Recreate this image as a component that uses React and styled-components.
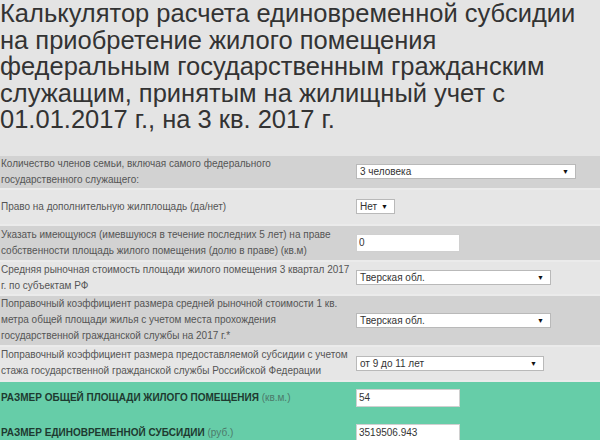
import React from "react";
import styled, { createGlobalStyle } from "styled-components";

const GlobalStyle = createGlobalStyle`
  html, body {
    margin: 0;
    padding: 0;
    background: #e4e4e4;
  }
  body {
    font-family: "Liberation Sans", Arial, sans-serif;
    overflow: hidden;
  }
`;

const rows = [
  {
    label: "Количество членов семьи, включая самого федерального государственного служащего:",
    control: { type: "select", value: "3 человека", width: 220 },
    tone: "dark",
    h: 32,
  },
  {
    label: "Право на дополнительную жилплощадь (да/нет)",
    control: { type: "select", value: "Нет", width: 39 },
    tone: "light",
    h: 34,
  },
  {
    label:
      "Указать имеющуюся (имевшуюся в течение последних 5 лет) на праве собственности площадь жилого помещения (долю в праве) (кв.м)",
    control: { type: "input", value: "0" },
    tone: "dark",
    h: 34,
  },
  {
    label: "Средняя рыночная стоимость площади жилого помещения 3 квартал 2017 г. по субъектам РФ",
    control: { type: "select", value: "Тверская обл.", width: 195 },
    tone: "light",
    h: 32,
  },
  {
    label:
      "Поправочный коэффициент размера средней рыночной стоимости 1 кв. метра общей площади жилья с учетом места прохождения государственной гражданской службы на 2017 г.*",
    control: { type: "select", value: "Тверская обл.", width: 195 },
    tone: "dark",
    h: 49,
  },
  {
    label:
      "Поправочный коэффициент размера предоставляемой субсидии с учетом стажа государственной гражданской службы Российской Федерации",
    control: { type: "select", value: "от 9 до 11 лет", width: 188 },
    tone: "light",
    h: 33,
  },
];

const results = [
  { title: "РАЗМЕР ОБЩЕЙ ПЛОЩАДИ ЖИЛОГО ПОМЕЩЕНИЯ", unit: "(кв.м.)", value: "54", h: 32 },
  { title: "РАЗМЕР ЕДИНОВРЕМЕННОЙ СУБСИДИИ", unit: "(руб.)", value: "3519506.943", h: 38 },
];

const App = () => {
  return (
    <Page>
      <GlobalStyle />
      <Title>
        Калькулятор расчета единовременной субсидии
        <br />
        на приобретение жилого помещения
        <br />
        федеральным государственным гражданским
        <br />
        служащим, принятым на жилищный учет с
        <br />
        01.01.2017 г., на 3 кв. 2017 г.
      </Title>
      <Table>
        {rows.map((r, i) => (
          <Row key={i} $tone={r.tone} $h={r.h}>
            <Label>{r.label}</Label>
            <Cell>
              {r.control.type === "select" ? (
                <Select $w={r.control.width}>
                  <span>{r.control.value}</span>
                  <Arrow>▼</Arrow>
                </Select>
              ) : (
                <Input readOnly value={r.control.value} />
              )}
            </Cell>
          </Row>
        ))}
        <Results>
          {results.map((r, i) => (
            <Row key={i} $tone="green" $h={r.h}>
              <Label>
                <Strong>{r.title}</Strong> <Unit>{r.unit}</Unit>
              </Label>
              <Cell>
                <Input readOnly value={r.value} />
              </Cell>
            </Row>
          ))}
        </Results>
      </Table>
    </Page>
  );
};

export default App;

const Page = styled.div`
  width: 600px;
  height: 440px;
  overflow: hidden;
`;

const Title = styled.h1`
  margin: 0 0 23px 0;
  font-size: 25.5px;
  line-height: 26.5px;
  font-weight: normal;
  color: #333;
  white-space: nowrap;
`;

const Table = styled.div`
  display: flex;
  flex-direction: column;
  gap: 2px;
  background: #ebebeb;
`;

const Results = styled.div`
  display: flex;
  flex-direction: column;
`;

const tones = {
  dark: "#d2d2d2",
  light: "#e6e6e6",
  green: "#66cda8",
};

const Row = styled.div`
  display: flex;
  align-items: center;
  height: ${(p) => p.$h}px;
  flex-shrink: 0;
  background: ${(p) => tones[p.$tone]};
`;

const Label = styled.div`
  width: 352px;
  flex-shrink: 0;
  padding-left: 1px;
  font-size: 10px;
  line-height: 16px;
  color: #555;
`;

const Cell = styled.div`
  padding-left: 3px;
  display: flex;
  align-items: center;
`;

const Select = styled.div`
  box-sizing: border-box;
  width: ${(p) => p.$w}px;
  height: 15px;
  background: #fff;
  border: 1px solid #b9b9b9;
  display: flex;
  align-items: center;
  justify-content: space-between;
  padding: 0 6px 0 3px;
  font-size: 10px;
  color: #333;
`;

const Arrow = styled.span`
  font-size: 7px;
  color: #111;
`;

const Input = styled.input`
  box-sizing: border-box;
  width: 104px;
  height: 18px;
  border: 1px solid #d0d0d0;
  background: #fff;
  padding: 0 2px;
  font-family: "Liberation Sans", Arial, sans-serif;
  font-size: 10px;
  color: #333;
  outline: none;
`;

const Strong = styled.b`
  color: #1e3a30;
  font-weight: bold;
`;

const Unit = styled.span`
  color: #4c7a6a;
`;
